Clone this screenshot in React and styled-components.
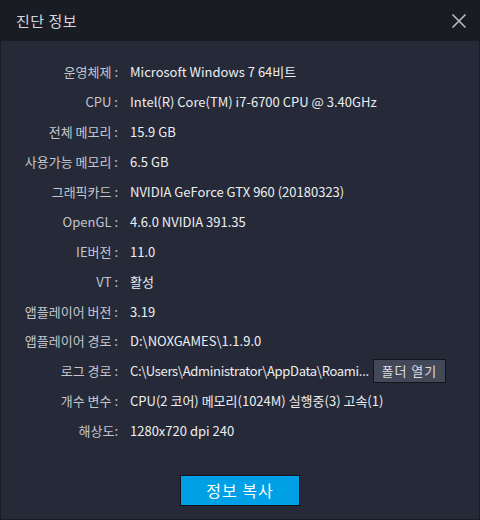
import React from "react";
import styled, { createGlobalStyle } from "styled-components";

const Global = createGlobalStyle`
  html, body { margin: 0; padding: 0; background: #1a1c24; }
  body { font-family: "Noto Sans CJK KR", "Noto Sans", sans-serif; }
`;

const Window = styled.div`
  width: 480px;
  height: 520px;
  display: flex;
  flex-direction: column;
  background: #1a1c24;
`;

const TitleBar = styled.div`
  height: 41px;
  display: flex;
  align-items: center;
  justify-content: space-between;
  padding: 0 13px 0 16px;
  box-sizing: border-box;
`;

const Title = styled.div`
  color: #d4d7de;
  font-size: 15px;
  letter-spacing: 0.5px;
`;

const Close = styled.button`
  background: none;
  border: none;
  padding: 0;
  width: 16px;
  height: 16px;
  display: flex;
  cursor: pointer;
`;

const Body = styled.div`
  flex: 1;
  margin: 0 1px 1px;
  background: #262a38;
  display: flex;
  flex-direction: column;
  padding-top: 16px;
`;

const Rows = styled.div`
  display: flex;
  flex-direction: column;
`;

const Row = styled.div`
  display: grid;
  grid-template-columns: 117px 1fr;
  column-gap: 12px;
  align-items: center;
  height: 29.9px;
  font-size: 13px;
`;

const Label = styled.div`
  text-align: right;
  color: #c3c6cd;
  white-space: nowrap;
`;

const Value = styled.div`
  color: #eceef1;
  white-space: nowrap;
  display: flex;
  align-items: center;
  gap: 4px;
`;

const Text = styled.span`
  letter-spacing: ${(p) => (p.$tight ? "-0.3px" : "0")};
`;

const SmallButton = styled.button`
  height: 24px;
  width: 73px;
  flex: none;
  background: #434859;
  border: 1px solid #12141a;
  color: #dcdee3;
  font-family: inherit;
  font-size: 13px;
  padding: 0;
  letter-spacing: 1px;
`;

const Footer = styled.div`
  display: flex;
  justify-content: center;
  padding-top: 29px;
`;

const PrimaryButton = styled.button`
  width: 120px;
  height: 31px;
  background: #00a0e6;
  border: 1px solid #12141a;
  color: #ffffff;
  font-family: inherit;
  font-size: 16px;
  letter-spacing: 1px;
  padding: 0;
`;

const rows = [
  ["운영체제 :", "Microsoft Windows 7 64비트"],
  ["CPU :", "Intel(R) Core(TM) i7-6700 CPU @ 3.40GHz"],
  ["전체 메모리 :", "15.9 GB"],
  ["사용가능 메모리 :", "6.5 GB"],
  ["그래픽카드 :", "NVIDIA GeForce GTX 960 (20180323)"],
  ["OpenGL :", "4.6.0 NVIDIA 391.35"],
  ["IE버전 :", "11.0"],
  ["VT :", "활성"],
  ["앱플레이어 버전 :", "3.19"],
  ["앱플레이어 경로 :", "D:\\NOXGAMES\\1.1.9.0"],
  ["로그 경로 :", "C:\\Users\\Administrator\\AppData\\Roami...", true],
  ["개수 변수 :", "CPU(2 코어) 메모리(1024M) 실행중(3) 고속(1)"],
  ["해상도:", "1280x720 dpi 240"],
];

export default function App() {
  return (
    <Window>
      <Global />
      <TitleBar>
        <Title>진단 정보</Title>
        <Close aria-label="close">
          <svg width="16" height="16" viewBox="0 0 16 16">
            <path d="M1.5 1.5 L14.5 14.5 M14.5 1.5 L1.5 14.5" stroke="#b9bcc4" strokeWidth="1.6" />
          </svg>
        </Close>
      </TitleBar>
      <Body>
        <Rows>
          {rows.map(([label, value, folder]) => (
            <Row key={label}>
              <Label>{label}</Label>
              <Value>
                <Text $tight={folder}>{value}</Text>
                {folder && <SmallButton>폴더 열기</SmallButton>}
              </Value>
            </Row>
          ))}
        </Rows>
        <Footer>
          <PrimaryButton>정보 복사</PrimaryButton>
        </Footer>
      </Body>
    </Window>
  );
}
